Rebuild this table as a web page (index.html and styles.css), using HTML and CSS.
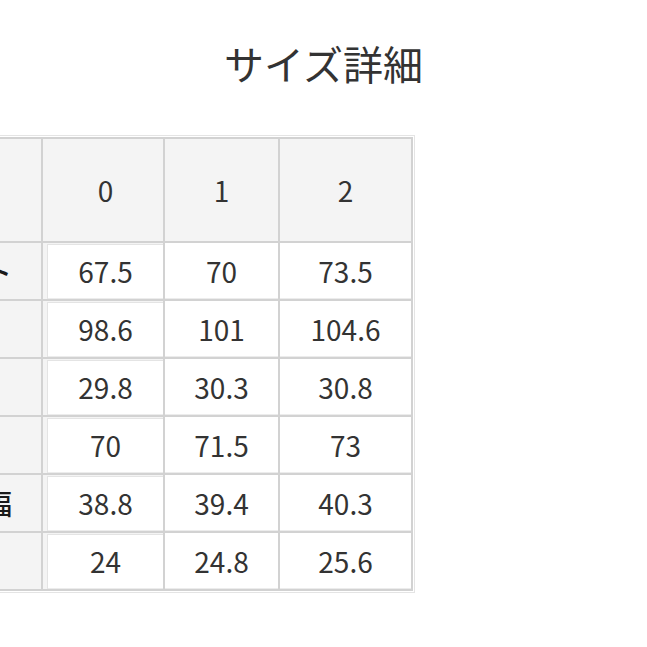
FILE: index.html
```html
<!DOCTYPE html>
<html lang="ja">
<head>
<meta charset="utf-8">
<title>サイズ詳細</title>
<link rel="stylesheet" href="styles.css">
</head>
<body>
<h1 class="title">サイズ詳細</h1>
<div class="table-wrap">
  <div class="size-grid">
    <div class="cell head label"></div>
    <div class="cell head c0">0</div>
    <div class="cell head">1</div>
    <div class="cell head">2</div>

    <div class="cell label">ウエスト</div>
    <div class="cell val c0">67.5</div>
    <div class="cell val">70</div>
    <div class="cell val">73.5</div>

    <div class="cell label">ヒップ</div>
    <div class="cell val c0">98.6</div>
    <div class="cell val">101</div>
    <div class="cell val">104.6</div>

    <div class="cell label">股上</div>
    <div class="cell val c0">29.8</div>
    <div class="cell val">30.3</div>
    <div class="cell val">30.8</div>

    <div class="cell label">股下</div>
    <div class="cell val c0">70</div>
    <div class="cell val">71.5</div>
    <div class="cell val">73</div>

    <div class="cell label">ワタリ幅</div>
    <div class="cell val c0">38.8</div>
    <div class="cell val">39.4</div>
    <div class="cell val">40.3</div>

    <div class="cell label">裾幅</div>
    <div class="cell val c0">24</div>
    <div class="cell val">24.8</div>
    <div class="cell val">25.6</div>
  </div>
</div>
</body>
</html>
```

FILE: styles.css
```css
html, body {
  margin: 0;
  padding: 0;
  background: #ffffff;
  overflow: hidden;
}

body {
  font-family: "Noto Sans CJK JP", "Noto Sans", sans-serif;
  color: #333333;
}

.title {
  margin: 0;
  padding-top: 43px;
  font-size: 40px;
  line-height: 40px;
  font-weight: 400;
  text-align: center;
  color: #333333;
}

.table-wrap {
  margin-top: 52px;
  margin-left: -133px;
  width: max-content;
  border: 1px solid #e4e4e4;
  padding: 1px;
  background: #ffffff;
}

.size-grid {
  display: grid;
  grid-template-columns: 170px 120px 113px 131px;
  grid-template-rows: 102px repeat(6, 56px);
  gap: 2px;
  padding: 2px;
  background: #d2d2d2;
}

.cell {
  display: flex;
  align-items: center;
  justify-content: center;
  font-size: 28px;
  line-height: 1;
  color: #333333;
}

.head {
  background: #f4f4f4;
}

.label {
  background: #f4f4f4;
  color: #1a1a1a;
  font-weight: 500;
}

.val {
  background: #ffffff;
  box-shadow: inset 0 -1px 0 #ececec;
}

.val.c0 {
  box-shadow: inset 4px 1px 0 #f4f4f4, inset 5px 2px 0 #e4e4e4, inset 0 -1px 0 #ececec;
}

.c0 {
  padding-left: 5px;
}
```
